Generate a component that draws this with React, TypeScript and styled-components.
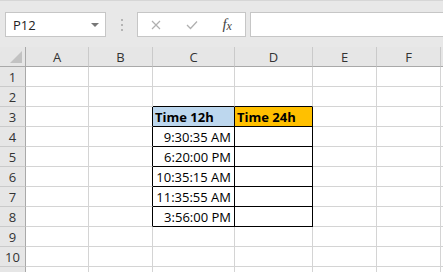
import React from 'react'
import styled, { createGlobalStyle } from 'styled-components'

const GlobalStyle = createGlobalStyle`
  html, body { margin: 0; padding: 0; background: #fff; overflow: hidden; }
  body { font-family: 'Open Sans', 'Liberation Sans', sans-serif; }
`

const Window = styled.div`
  width: 443px;
  height: 272px;
  overflow: hidden;
  background: #e8e8e8;
`

const Toolbar = styled.div`
  height: 47px;
  box-sizing: border-box;
  border-top: 1px solid #d6d6d6;
  padding: 11px 0 0 5px;
  display: flex;
  align-items: flex-start;
`

const NameBox = styled.div`
  width: 101px;
  height: 25px;
  box-sizing: border-box;
  border: 1px solid #c6c6c6;
  background: #fff;
  display: flex;
  align-items: center;
  padding-left: 7px;
  font-size: 13px;
  color: #222;
`

const Arrow = styled.span`
  margin-left: auto;
  margin-right: 6px;
  width: 0;
  height: 0;
  border-left: 4px solid transparent;
  border-right: 4px solid transparent;
  border-top: 4px solid #777;
`

const Grip = styled.div`
  width: 31px;
  height: 25px;
  display: flex;
  flex-direction: column;
  align-items: center;
  justify-content: center;
  gap: 3px;
`

const GripDot = styled.span`
  width: 2px;
  height: 2px;
  background: #b4b4b4;
`

const FxGroup = styled.div`
  width: 109px;
  height: 25px;
  box-sizing: border-box;
  border: 1px solid #c6c6c6;
  background: #fff;
  display: flex;
`

const FxSlot = styled.div`
  width: 36px;
  height: 100%;
  display: flex;
  align-items: center;
  justify-content: center;
`

const FxLabel = styled.span`
  font-family: 'Liberation Serif', serif;
  font-style: italic;
  font-size: 15px;
  color: #444;
  line-height: 1;
  sub { font-size: 12px; vertical-align: -1px; }
`

const FormulaInput = styled.div`
  flex: 1;
  margin-left: 4px;
  height: 25px;
  box-sizing: border-box;
  border: 1px solid #c6c6c6;
  border-right: none;
  background: #fff;
`

const Sheet = styled.div`
  display: grid;
  grid-template-columns: 26px 63px 64px 82px 78px 64px 64px 1fr;
  grid-auto-rows: 20px;
`

const ColHead = styled.div`
  box-sizing: border-box;
  background: #e6e6e6;
  border-right: 1px solid #cacaca;
  border-bottom: 1px solid #a9a9a9;
  display: flex;
  align-items: center;
  justify-content: center;
  font-size: 13px;
  color: #333;
`

const Corner = styled(ColHead)`
  border-right: 1px solid #a9a9a9;
  align-items: flex-start;
  justify-content: flex-start;
`

const RowHead = styled.div`
  box-sizing: border-box;
  background: #e6e6e6;
  border-right: 1px solid #a9a9a9;
  border-bottom: 1px solid #cacaca;
  display: flex;
  align-items: center;
  justify-content: center;
  font-size: 13px;
  color: #333;
`

const Cell = styled.div<{ $bg?: string; $rb?: boolean; $bb?: boolean; $right?: boolean; $bold?: boolean }>`
  box-sizing: border-box;
  background: ${p => p.$bg || '#fff'};
  border-right: 1px solid ${p => (p.$rb ? '#000' : '#d4d4d4')};
  border-bottom: 1px solid ${p => (p.$bb ? '#000' : '#d4d4d4')};
  display: flex;
  align-items: center;
  justify-content: ${p => (p.$right ? 'flex-end' : 'flex-start')};
  padding: 0 3px 0 2px;
  font-size: 13px;
  font-weight: ${p => (p.$bold ? 700 : 400)};
  color: #000;
  white-space: nowrap;
  overflow: hidden;
`

const cols = ['A', 'B', 'C', 'D', 'E', 'F', '']
const times = ['9:30:35 AM', '6:20:00 PM', '10:35:15 AM', '11:35:55 AM', '3:56:00 PM']

const cellFor = (row: number, col: number) => {
  const inTable = row >= 3 && row <= 8 && (col === 2 || col === 3)
  const props = {
    $rb: inTable || (col === 1 && row >= 3 && row <= 8),
    $bb: inTable || (row === 2 && (col === 2 || col === 3)),
  }
  if (row === 3 && col === 2) return <Cell key={col} {...props} $bg="#bdd7ee" $bold>Time 12h</Cell>
  if (row === 3 && col === 3) return <Cell key={col} {...props} $bg="#ffc000" $bold>Time 24h</Cell>
  if (col === 2 && row >= 4 && row <= 8) return <Cell key={col} {...props} $right>{times[row - 4]}</Cell>
  return <Cell key={col} {...props} />
}

export default function App() {
  const rows = Array.from({ length: 11 }, (_, i) => i + 1)
  return (
    <Window>
      <GlobalStyle />
      <Toolbar>
        <NameBox>
          P12
          <Arrow />
        </NameBox>
        <Grip>
          <GripDot />
          <GripDot />
          <GripDot />
        </Grip>
        <FxGroup>
          <FxSlot>
            <svg width="10" height="10" viewBox="0 0 10 10">
              <path d="M1 1 L9 9 M9 1 L1 9" stroke="#b0b0b0" strokeWidth="1.2" />
            </svg>
          </FxSlot>
          <FxSlot>
            <svg width="12" height="10" viewBox="0 0 12 10">
              <path d="M1 5 L4.5 8.5 L11 1.5" stroke="#b0b0b0" strokeWidth="1.3" fill="none" />
            </svg>
          </FxSlot>
          <FxSlot>
            <FxLabel>f<sub>x</sub></FxLabel>
          </FxSlot>
        </FxGroup>
        <FormulaInput />
      </Toolbar>
      <Sheet>
        <Corner>
          <svg width="25" height="19" viewBox="0 0 25 19">
            <polygon points="10,16 22,16 22,4" fill="#c2c2c2" />
          </svg>
        </Corner>
        {cols.map((c, i) => (
          <ColHead key={i}>{c}</ColHead>
        ))}
        {rows.map(r => (
          <React.Fragment key={r}>
            <RowHead>{r <= 10 ? r : ''}</RowHead>
            {cols.map((_, ci) => cellFor(r, ci))}
          </React.Fragment>
        ))}
      </Sheet>
    </Window>
  )
}
